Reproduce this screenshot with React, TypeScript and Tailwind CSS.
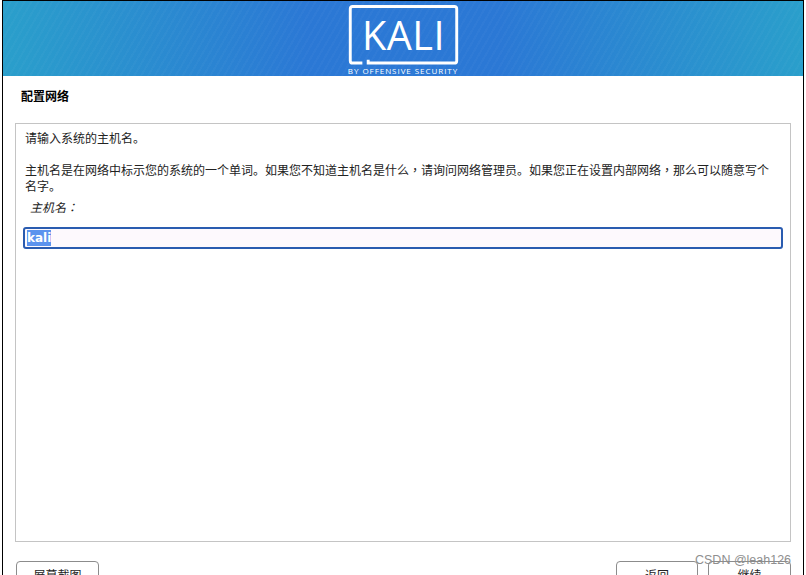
const cjk = "font-['Liberation_Sans','Noto_Sans_CJK_SC',sans-serif]"

function KaliLogo() {
  return (
    <div className="flex flex-col items-center">
      <svg width="113" height="62" viewBox="0 0 113 62" className="block">
        <path
          d="M14 60 H4 Q1.500 60 1.500 57.500 V4 Q1.500 1.500 4 1.500 H109 Q111.500 1.500 111.500 4 V57.500 Q111.500 60 109 60 H20 V56.500"
          fill="none"
          stroke="#ffffff"
          strokeWidth="3"
        />
        <text x="56.500" y="46" textAnchor="middle" fill="#ffffff" fontSize="41" fontWeight="500" fontFamily="'Open Sans', sans-serif" letterSpacing="0.5">
          KALI
        </text>
      </svg>
      <span className="mt-[1px] text-[8px] font-medium leading-[10px] tracking-[0.95px] text-white font-['Open_Sans',sans-serif]">
        BY OFFENSIVE SECURITY
      </span>
    </div>
  )
}

function NavButton({ label, width }: { label: string; width: string }) {
  return (
    <button className={`h-[30px] ${width} rounded-[4px] border border-[#8c8c8c] bg-white text-[12px] leading-[16px] self-start text-[#222222]`}>
      <span className="block">{label}</span>
    </button>
  )
}

export default function App() {
  return (
    <div className={`relative h-[575px] w-[806px] overflow-hidden bg-white pl-[2px] pr-[2px] ${cjk}`}>
      <div className="flex h-[575px] flex-col border-x border-t border-black bg-white">
        <header className="flex h-[75px] shrink-0 justify-center bg-[repeating-linear-gradient(120deg,rgba(255,255,255,0.025)_0_2px,transparent_2px_6px),linear-gradient(90deg,#2a9fcb_0%,#2b78d5_38%,#2b78d5_62%,#2a9fcb_100%)] pt-[4px]">
          <KaliLogo />
        </header>
        <div className="flex min-h-0 flex-1 flex-col pl-[12px] pr-[12px]">
          <h1 className="pl-[6px] pt-[14px] text-[12px] font-bold leading-[14px] text-black">配置网络</h1>
          <section className="mt-[19px] flex h-[419px] shrink-0 flex-col border border-[#c4c4c4] px-[7px] pt-[7px] text-[12px] leading-[16px] text-[#222222]">
            <p className="pl-[2px]">请输入系统的主机名。</p>
            <p className="mt-[15px] pl-[2px] pr-[10px]">
              主机名是在网络中标示您的系统的一个单词。如果您不知道主机名是什么<span className="font-['Noto_Sans_CJK_TC',sans-serif]">，</span>请询问网络管理员。如果您正在设置内部网络<span className="font-['Noto_Sans_CJK_TC',sans-serif]">，</span>那么可以随意写个名字。
            </p>
            <p className="mt-[5px] pl-[7px] italic font-['Liberation_Sans','Noto_Sans_CJK_TC',sans-serif]">主机名：</p>
            <div className="mt-[11px] flex h-[22px] items-center rounded-[3px] border-2 border-[#2a5cb0] bg-[#fdf9fd] pl-[2px]">
              <span className="bg-[#5b93ee] font-['DejaVu_Sans',sans-serif] text-[12px] font-bold leading-[16px] text-white">kali</span>
            </div>
          </section>
          <div className="mt-[19px] flex justify-between">
            <NavButton label="屏幕截图" width="w-[83px] ml-[1px]" />
            <div className="flex gap-[10px]">
              <NavButton label="返回" width="w-[82px]" />
              <NavButton label="继续" width="w-[83px]" />
            </div>
          </div>
        </div>
      </div>
      <span className="absolute left-[695px] top-[553px] text-[12.500px] leading-[14px] text-[#8f8f8f]">CSDN @leah126</span>
    </div>
  )
}
